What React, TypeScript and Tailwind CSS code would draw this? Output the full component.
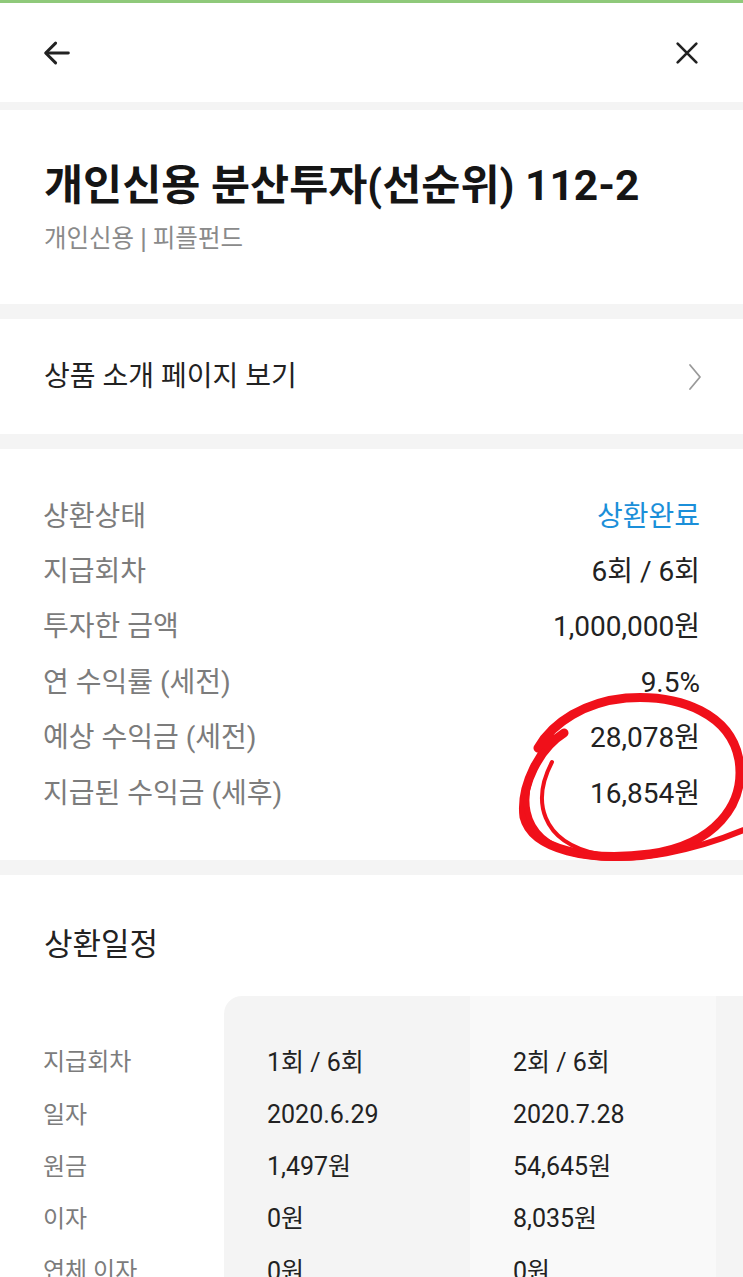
import { useState } from 'react';

const font = "font-['Roboto','Noto_Sans_CJK_KR',sans-serif]";

const infoRows = [
  { label: '상환상태', value: '상환완료', blue: true },
  { label: '지급회차', value: '6회 / 6회' },
  { label: '투자한 금액', value: '1,000,000원' },
  { label: '연 수익률 (세전)', value: '9.5%' },
  { label: '예상 수익금 (세전)', value: '28,078원' },
  { label: '지급된 수익금 (세후)', value: '16,854원' },
];

const labels = ['지급회차', '일자', '원금', '이자', '연체 이자'];

const schedule = [
  ['1회 / 6회', '2020.6.29', '1,497원', '0원', '0원'],
  ['2회 / 6회', '2020.7.28', '54,645원', '8,035원', '0원'],
  ['3회 / 6회', '2020.8.28', '55,012원', '7,668원', '0원'],
];

const App = () => {
  const [open] = useState(false);

  return (
    <div className={`relative w-[743px] h-[1277px] overflow-hidden bg-[#f4f4f4] ${font}`}>
      <div className="h-[3px] bg-[#8fc97a]" />

      {/* header */}
      <div className="h-[99px] bg-white flex items-center justify-between pl-[40px] pr-[42px]">
        <svg width="34" height="34" viewBox="0 0 24 24" fill="none" stroke="#222" strokeWidth="2.1" strokeLinecap="round" strokeLinejoin="round">
          <path d="M20 12H4.5" />
          <path d="M11 5l-7 7 7 7" />
        </svg>
        <svg width="28" height="28" viewBox="0 0 24 24" fill="none" stroke="#222" strokeWidth="2.3" strokeLinecap="round">
          <path d="M4 4l16 16M20 4L4 20" />
        </svg>
      </div>

      {/* title */}
      <div className="mt-[8px] bg-white px-[44px] pt-[52px] pb-[50px]">
        <h1 className="text-[42.5px] leading-[48px] font-bold text-[#151515]">개인신용 분산투자(선순위) 112-2</h1>
        <p className="mt-[13px] text-[24.5px] leading-[30px] text-[#8a8a8a]">
          개인신용 <span className="font-['Liberation_Sans',sans-serif] text-[25px]">|</span> 피플펀드
        </p>
      </div>

      {/* link row */}
      <div className="mt-[15px] h-[115px] bg-white flex items-center justify-between pl-[44px] pr-[40px]">
        <span className="text-[28px] text-[#222]">상품 소개 페이지 보기</span>
        <svg width="16" height="28" viewBox="0 0 16 28" fill="none" stroke="#9a9a9a" strokeWidth="1.8" strokeLinecap="round" strokeLinejoin="round">
          <path d="M3 2l10 12L3 26" />
        </svg>
      </div>

      {/* info */}
      <div className="mt-[15px] bg-white px-[43px] pt-[40px] pb-[39px]">
        {infoRows.map((r) => (
          <div key={r.label} className="flex items-center justify-between h-[55.4px] text-[28px]">
            <span className="text-[#7c7c7c]">{r.label}</span>
            <span className={r.blue ? 'text-[#1b8fd9]' : 'text-[#222]'}>{r.value}</span>
          </div>
        ))}
      </div>

      {/* schedule */}
      <div className="mt-[15px] bg-white pt-[51px]">
        <h2 className="px-[44px] text-[31px] leading-[38px] text-[#222]">상환일정</h2>
        <div className="mt-[32px] flex overflow-hidden">
          <div className="w-[224px] shrink-0 pl-[43px] pt-[40px]">
            {labels.map((l) => (
              <div key={l} className="h-[52.25px] flex items-center text-[24px] text-[#7c7c7c]">{l}</div>
            ))}
          </div>
          {schedule.map((col, i) => (
            <div
              key={i}
              className={`w-[246px] shrink-0 pl-[43px] pt-[40px] ${i === 0 ? 'bg-[#f4f4f4] rounded-tl-[18px]' : i === 1 ? 'bg-[#f9f9f9]' : 'bg-[#f4f4f4]'}`}
            >
              {col.map((v, j) => (
                <div key={j} className="h-[52.25px] flex items-center text-[25px] text-[#222]">{v}</div>
              ))}
            </div>
          ))}
        </div>
      </div>

      {/* red hand-drawn circle */}
      {!open && (
        <svg className="absolute left-0 top-0 pointer-events-none" width="743" height="1277" viewBox="0 0 743 1277" fill="none" stroke="#f0101a" strokeLinecap="round" strokeLinejoin="round">
          <path strokeWidth="9" d="M564 733 C540 748 520 785 524 817 C532 850 590 862 650 854 C714 845 746 805 739 760 C731 715 682 694 626 698 C585 702 553 722 538 748" />
          <path strokeWidth="6" d="M543 752 C517 792 518 838 573 853 C630 867 702 850 762 822" />
          <path strokeWidth="4" d="M552 762 C532 800 540 842 598 854" />
        </svg>
      )}
    </div>
  );
};

export default App;
